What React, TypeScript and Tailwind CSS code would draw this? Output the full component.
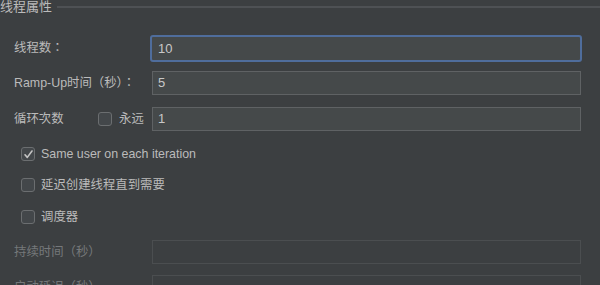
import React from 'react';

const font = { fontFamily: '"Liberation Sans", "Noto Sans CJK TC", sans-serif' };

function Checkbox({ checked }: { checked?: boolean }) {
  return (
    <span className="flex h-[14px] w-[14px] items-center justify-center rounded-[3px] border border-[#6b6e70] bg-[#43474a]">
      {checked && (
        <svg width="11" height="11" viewBox="0 0 11 11" fill="none">
          <path d="M2 5.8 L4.3 8.4 L9 2" stroke="#c4c4c4" strokeWidth="1.6" strokeLinecap="round" strokeLinejoin="round" />
        </svg>
      )}
    </span>
  );
}

export default function App() {
  return (
    <div className="h-[285px] w-[600px] overflow-hidden bg-[#3c3f41] text-[12.4px] text-[#bbbbbb]" style={font}>
      {/* Group header */}
      <div className="flex h-[14px] items-center">
        <span className="text-[13px] leading-[14px] text-[#bbbbbb]">线程属性</span>
        <div className="ml-[5px] h-[2px] flex-1 bg-[#4e5154]" />
      </div>

      <div className="pl-[14px]">
        <div className="mt-[21px] flex h-[27px] items-center">
          <span className="w-[136px]">线程数：</span>
          <div className="flex h-[27px] w-[432px] items-center rounded-[3px] border-2 border-[#4f6d9c] bg-[#45494a] pl-[6px] text-[13px] text-[#c8c8c8]">10</div>
        </div>

        <div className="mt-[9px] flex h-[24px] items-center">
          <span className="w-[138px]">Ramp-Up时间（秒）：</span>
          <div className="flex h-[24px] w-[429px] items-center border border-[#5f6264] bg-[#45494a] pl-[5px] text-[13px] text-[#c8c8c8]">5</div>
        </div>

        <div className="mt-[12px] flex h-[24px] items-center">
          <span className="w-[84px]">循环次数</span>
          <Checkbox />
          <span className="ml-[7px] w-[33px]">永远</span>
          <div className="flex h-[24px] w-[429px] items-center border border-[#5f6264] bg-[#45494a] pl-[5px] text-[13px] text-[#c8c8c8]">1</div>
        </div>

        <div className="ml-[7px] mt-[12px] flex h-[22px] items-center gap-[6px]">
          <Checkbox checked />
          <span>Same user on each iteration</span>
        </div>

        <div className="ml-[7px] mt-[9px] flex h-[22px] items-center gap-[6px]">
          <Checkbox />
          <span>延迟创建线程直到需要</span>
        </div>

        <div className="ml-[7px] mt-[10px] flex h-[22px] items-center gap-[6px]">
          <Checkbox />
          <span>调度器</span>
        </div>

        <div className="mt-[12px] flex h-[24px] items-center text-[#75787a]">
          <span className="w-[138px]">持续时间（秒）</span>
          <div className="h-[24px] w-[429px] border border-[#4b4e50] bg-[#3c3f41]" />
        </div>

        <div className="mt-[11px] flex h-[24px] items-center text-[#75787a]">
          <span className="w-[138px]">启动延迟（秒）</span>
          <div className="h-[24px] w-[429px] border border-[#4b4e50] bg-[#3c3f41]" />
        </div>
      </div>
    </div>
  );
}
